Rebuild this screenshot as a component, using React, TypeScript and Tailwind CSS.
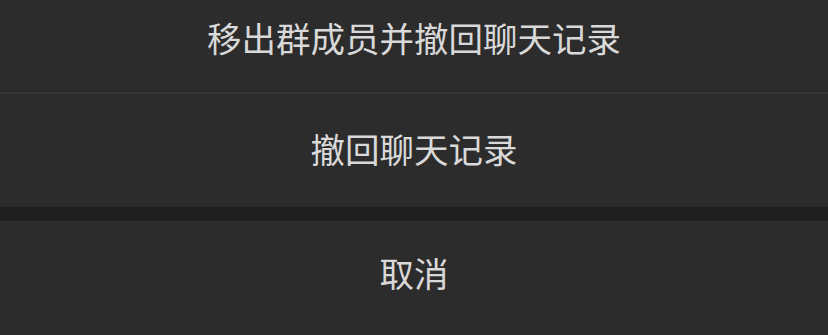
export default function App() {
  return (
    <div className="w-[828px] h-[335px] flex flex-col bg-[#1e1e1e] overflow-hidden" style={{ fontFamily: '"Noto Sans CJK SC", "Noto Sans", sans-serif' }}>
      <div className="h-[92px] shrink-0 flex items-center justify-center pb-[17px] bg-[#2c2c2c] text-[#d9d9d9] text-[34.5px] leading-none">
        移出群成员并撤回聊天记录
      </div>
      <div className="h-[2px] shrink-0 bg-[#353535]" />
      <div className="h-[113px] shrink-0 flex items-center justify-center pb-[4px] bg-[#2c2c2c] text-[#d9d9d9] text-[34.5px] leading-none">
        撤回聊天记录
      </div>
      <div className="h-[14px] shrink-0" />
      <div className="h-[114px] shrink-0 flex items-center justify-center pb-[12px] bg-[#2c2c2c] text-[#d9d9d9] text-[34.5px] leading-none">
        取消
      </div>
    </div>
  );
}
